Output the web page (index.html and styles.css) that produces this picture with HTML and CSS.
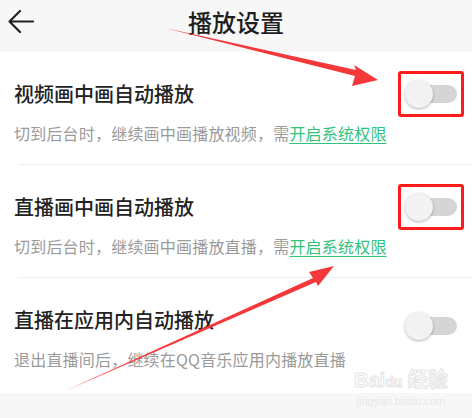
FILE: index.html
```html
<!DOCTYPE html>
<html lang="zh-CN">
<head>
  <meta charset="UTF-8">
  <title>播放设置</title>
  <link rel="stylesheet" href="styles.css">
</head>
<body>
  <div class="page">
    <div class="header">
      <svg class="back" width="28" height="26" viewBox="0 0 28 26">
        <path d="M26 12.5H3 M13 2 L2.5 12.5 L13 23" fill="none" stroke="#222" stroke-width="2.2" stroke-linecap="round" stroke-linejoin="round"/>
      </svg>
      <h1>播放设置</h1>
    </div>

    <div class="list">
      <div class="row">
        <div class="text">
          <div class="title">视频画中画自动播放</div>
          <div class="desc">切到后台时，继续画中画播放视频，需<a href="#">开启系统权限</a></div>
        </div>
        <div class="mark"><div class="toggle"><span class="knob"></span></div></div>
      </div>
      <div class="divider"></div>

      <div class="row">
        <div class="text">
          <div class="title">直播画中画自动播放</div>
          <div class="desc">切到后台时，继续画中画播放直播，需<a href="#">开启系统权限</a></div>
        </div>
        <div class="mark"><div class="toggle"><span class="knob"></span></div></div>
      </div>
      <div class="divider"></div>

      <div class="row">
        <div class="text">
          <div class="title">直播在应用内自动播放</div>
          <div class="desc">退出直播间后，继续在QQ音乐应用内播放直播</div>
        </div>
        <div class="plain"><div class="toggle"><span class="knob"></span></div></div>
      </div>
    </div>

    <div class="footer"></div>

    <!-- annotation arrows drawn over the screenshot -->
    <svg class="arrows" width="472" height="418" viewBox="0 0 472 418">
      <polygon fill="#f5393a" points="165,28 356,70 354,65 378,80 352,86 355,76"/>
      <polygon fill="#f5393a" points="65,391 313,278 309,272 334,266 318,286 316,282"/>
    </svg>

    <div class="watermark">
      <div class="wm-logo">Bai<span class="paw">du</span> 经验</div>
      <div class="wm-url">jingyan.baidu.com</div>
    </div>
  </div>
</body>
</html>
```

FILE: styles.css
```css
body {
  margin: 0;
  background: #fff;
  font-family: "Noto Sans CJK SC", "Noto Sans", sans-serif;
  color: #222;
}

.page {
  position: relative;
  width: 472px;
  height: 418px;
  overflow: hidden;
  display: flex;
  flex-direction: column;
}

.header {
  height: 52px;
  background: #f7f7f7;
  display: flex;
  align-items: center;
  justify-content: center;
  position: relative;
}

.header .back {
  position: absolute;
  left: 7px;
  top: 9px;
}

.header h1 {
  margin: 0 0 8px 0;
  font-size: 24px;
  font-weight: 500;
  color: #1e1e1e;
  line-height: 30px;
}

.list {
  flex: 1;
}

.row {
  height: 112px;
  padding-left: 14px;
  padding-right: 8px;
  display: flex;
  align-items: flex-start;
  box-sizing: border-box;
}

.text {
  flex: 1;
  padding-top: 30px;
}

.title {
  font-size: 20px;
  font-weight: 500;
  line-height: 24px;
  color: #222;
}

.desc {
  margin-top: 16px;
  font-size: 16px;
  line-height: 22px;
  letter-spacing: 0.2px;
  color: #9a9a9a;
}

.desc a {
  color: #31c27c;
  text-decoration: underline;
  text-underline-offset: 3px;
}

.divider {
  height: 1px;
  background: #eeeeee;
  margin-left: 18px;
}

.mark {
  margin-top: 19px;
  width: 60px;
  height: 40px;
  border: 3px solid #ff1a1a;
  border-radius: 3px;
  display: flex;
  align-items: center;
  justify-content: center;
}

.plain {
  margin-top: 25px;
  width: 66px;
  height: 46px;
  display: flex;
  align-items: center;
  justify-content: center;
}

.toggle {
  position: relative;
  width: 50px;
  height: 18px;
  border-radius: 9px;
  background: #d5d5d5;
  margin-left: 2px;
}

.knob {
  position: absolute;
  left: -2px;
  top: -5px;
  width: 28px;
  height: 28px;
  border-radius: 50%;
  background: #f2f2f2;
  box-shadow: 0 1px 3px rgba(0, 0, 0, 0.3);
}

.footer {
  height: 25px;
  background: #f7f7f7;
}

.arrows {
  position: absolute;
  left: 0;
  top: 0;
}

.watermark {
  position: absolute;
  left: 354px;
  top: 368px;
  text-align: center;
  color: #fff;
}

.wm-logo {
  font-family: "Liberation Sans", "Noto Sans CJK SC", sans-serif;
  font-size: 20px;
  font-weight: bold;
  line-height: 24px;
  -webkit-text-stroke: 1px #e4e4e4;
}

.wm-logo .paw {
  font-size: 14px;
}

.wm-url {
  font-family: "Liberation Sans", sans-serif;
  font-size: 11px;
  line-height: 14px;
  color: #e8e8e8;
}
```
